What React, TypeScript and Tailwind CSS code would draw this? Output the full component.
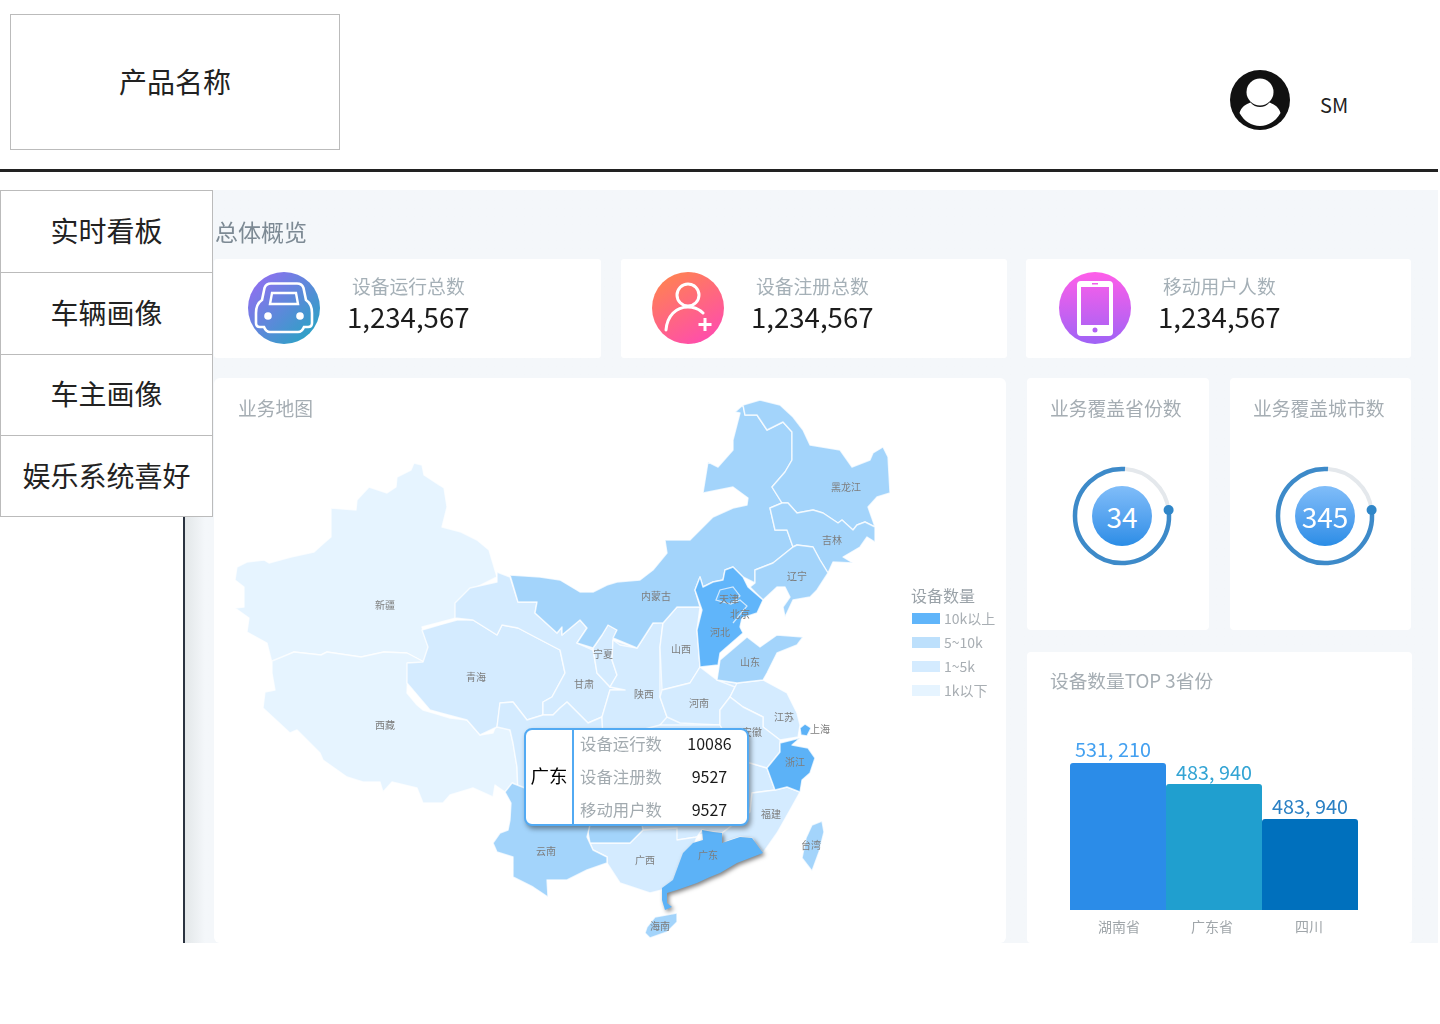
const provinces: { fill: string; pts: string }[] = [
  // base under the central provinces, closes the gaps between them
  { fill: "#d4ebff", pts: "510,577 518,602 557,633 577,643 593,648 613,640 637,648 663,623 677,607 700,607 697,630 700,667 717,680 737,683 760,690 740,760 767,768 722,833 590,843 587,827 518,795 497,727 543,702" },
  // xinjiang
  { fill: "#e6f4ff", pts: "235,580 237,567 247,562 264,560 269,563 291,557 314,552 324,543 331,537 331,508 356,510 357,500 369,487 387,493 396,487 397,477 411,470 414,463 422,465 424,475 444,488 447,507 442,527 461,532 477,540 489,550 497,577 477,587 456,605 456,618 422,627 429,647 426,663 407,653 384,652 361,657 327,652 321,655 294,652 272,663 267,643 247,632 249,618 235,608 244,607 244,587" },
  // xizang
  { fill: "#e6f4ff", pts: "272,661 294,652 321,655 327,652 361,657 384,652 407,653 426,663 408,663 407,693 417,705 423,710 450,718 467,720 480,735 493,733 497,723 510,730 513,743 517,767 518,795 513,783 505,792 495,785 493,797 473,788 450,795 443,803 423,803 417,788 392,782 383,792 380,782 363,782 347,777 323,760 320,753 297,730 290,733 263,708 265,692 275,690 272,673" },
  // qinghai
  { fill: "#d4ebff", pts: "407,663 423,662 428,647 422,630 457,620 473,620 497,635 502,625 518,628 537,638 560,650 565,673 552,697 543,702 543,715 527,720 513,702 500,703 497,727 480,735 467,720 430,710 407,683" },
  // gansu
  { fill: "#d4ebff", pts: "497,572 510,577 518,602 537,602 535,613 557,633 562,627 562,635 580,620 587,628 577,643 593,650 597,673 610,687 625,690 610,690 602,717 588,723 567,702 560,708 553,715 543,715 543,702 552,697 565,673 560,650 537,638 518,628 502,625 497,635 473,620 455,618 455,603 470,588 497,582" },
  // sichuan
  { fill: "#d4ebff", pts: "500,703 513,702 527,720 543,715 553,715 560,708 567,702 588,723 602,717 603,740 620,760 600,790 590,800 560,800 530,790 518,795 517,767 513,743 510,730 497,727" },
  // ningxia
  { fill: "#d4ebff", pts: "593,648 597,673 610,687 617,675 612,660 613,640 617,630 608,625 602,635" },
  // shaanxi
  { fill: "#d4ebff", pts: "663,622 653,623 637,648 620,645 613,640 612,660 617,675 610,687 625,690 610,690 602,717 603,740 640,745 660,725 667,717 660,697 660,647" },
  // shanxi
  { fill: "#d4ebff", pts: "677,607 700,607 697,630 700,667 690,683 662,690 660,647 663,623" },
  // henan
  { fill: "#d4ebff", pts: "660,697 667,717 680,723 720,725 720,710 730,697 735,687 717,680 700,667 690,683 662,690" },
  // central block under the tooltip
  { fill: "#d4ebff", pts: "603,740 660,725 720,725 740,760 767,768 775,790 752,793 750,812 722,833 702,830 697,837 677,840 590,843 587,827 600,790" },
  // jiangsu
  { fill: "#d4ebff", pts: "737,683 763,680 787,693 797,713 800,725 798,737 780,740 763,727 763,717 743,707 730,697" },
  // anhui
  { fill: "#d4ebff", pts: "730,697 743,707 763,717 763,727 780,740 780,752 767,768 740,760 720,725 720,710" },
  // fujian
  { fill: "#d4ebff", pts: "775,790 787,787 800,792 790,810 777,833 763,853 752,838 740,837 722,843 722,833 750,812 752,793" },
  // guangxi
  { fill: "#d4ebff", pts: "590,843 630,843 643,830 677,828 677,840 697,837 693,847 677,880 662,890 650,893 620,883 607,863 607,857 593,850" },
  // guizhou
  { fill: "#a3d4fb", pts: "587,827 600,815 640,815 643,830 630,843 590,843" },
  // yunnan
  { fill: "#a3d4fb", pts: "512,783 505,792 511,803 510,820 508,830 500,833 493,843 497,852 513,857 513,877 533,887 548,897 547,880 567,880 587,870 607,863 607,857 593,850 587,837 590,825 530,790" },
  // neimenggu
  { fill: "#a3d4fb", pts: "510,575 540,577 560,580 580,592 593,592 607,585 617,582 640,580 653,570 667,553 665,540 690,540 713,517 733,508 747,505 748,498 733,487 703,493 708,462 718,467 733,450 733,440 740,413 735,412 743,405 745,415 757,415 767,430 783,422 792,432 792,460 785,472 772,487 782,503 770,508 775,530 787,530 793,547 773,563 755,570 755,583 743,577 733,567 725,570 723,580 713,582 703,587 700,577 695,590 700,607 677,607 663,623 653,623 637,648 613,638 617,630 608,625 602,635 593,648 577,643 587,628 580,620 562,635 562,627 557,633 535,613 537,602 518,602" },
  // heilongjiang
  { fill: "#a3d4fb", pts: "743,405 760,400 780,405 793,417 803,430 810,445 840,450 852,467 870,460 873,453 883,447 888,457 890,493 877,497 868,507 875,527 865,522 857,525 853,530 842,520 838,523 823,513 813,510 797,513 788,503 782,503 772,487 785,472 792,460 792,432 783,422 767,430 757,415 745,415" },
  // jilin
  { fill: "#a3d4fb", pts: "770,508 782,503 788,503 797,513 813,510 823,513 838,523 842,520 853,530 857,525 865,522 875,527 875,542 867,537 860,547 843,557 853,563 833,562 828,573 820,560 813,547 797,545 793,547 787,530 775,530" },
  // liaoning
  { fill: "#a3d4fb", pts: "793,547 797,545 813,547 820,560 828,573 817,590 810,597 793,600 785,617 783,607 790,597 785,587 777,587 763,600 750,587 755,583 755,570 773,563" },
  // shandong
  { fill: "#a3d4fb", pts: "720,660 747,637 760,647 777,635 803,637 797,645 777,653 767,673 763,680 737,683 717,680" },
  // hebei
  { fill: "#60b5fa", pts: "700,577 703,587 713,582 723,580 725,570 733,567 743,577 748,587 763,600 757,613 742,618 740,627 743,633 720,653 718,665 700,667 697,630 702,610 695,590" },
  // taiwan
  { fill: "#a3d4fb", pts: "822,821 812,825 806,838 802,858 812,871 819,852 824,832" },
  // hainan
  { fill: "#a3d4fb", pts: "647,927 655,917 677,913 677,922 667,932 650,938 645,933" },
  // zhejiang
  { fill: "#5cb2f7", pts: "780,743 800,738 792,745 808,748 815,758 810,773 802,780 800,792 787,787 775,790 767,768 780,752" },
  // shanghai
  { fill: "#5cb2f7", pts: "800,728 805,724 811,728 807,736 801,735" },
];

const guangdong =
  "702,830 713,832 722,833 722,843 740,837 752,838 763,853 737,863 720,873 710,877 697,883 677,890 667,893 667,903 672,907 665,910 662,900 662,888 673,880 683,853 693,843 703,840";

const mapLabels: [string, number, number][] = [
  ["新疆", 385, 605],
  ["西藏", 385, 725],
  ["青海", 476, 677],
  ["甘肃", 584, 684],
  ["宁夏", 603, 654],
  ["陕西", 644, 694],
  ["山西", 681, 649],
  ["内蒙古", 656, 596],
  ["河南", 699, 703],
  ["河北", 720, 632],
  ["北京", 740, 614],
  ["天津", 729, 599],
  ["山东", 750, 662],
  ["辽宁", 797, 576],
  ["吉林", 832, 540],
  ["黑龙江", 846, 487],
  ["江苏", 784, 717],
  ["安徽", 752, 732],
  ["上海", 820, 729],
  ["浙江", 795, 762],
  ["福建", 771, 814],
  ["台湾", 811, 845],
  ["广东", 708, 855],
  ["广西", 645, 860],
  ["云南", 546, 851],
  ["海南", 660, 926],
];

const legend = [
  { color: "bg-[#60b5fa]", label: "10k以上" },
  { color: "bg-[#bde0fc]", label: "5~10k" },
  { color: "bg-[#d4ebff]", label: "1~5k" },
  { color: "bg-[#e6f4ff]", label: "1k以下" },
];

const tooltipRows = [
  { label: "设备运行数", value: "10086" },
  { label: "设备注册数", value: "9527" },
  { label: "移动用户数", value: "9527" },
];

const bars = [
  { value: "531, 210", name: "湖南省", height: "h-[147px]", bg: "bg-[#2b8ce8]", text: "text-[#43a0f0] pr-[10px] pb-[2px]", axis: "pl-[2px]" },
  { value: "483, 940", name: "广东省", height: "h-[126px]", bg: "bg-[#209fcf]", text: "text-[#33a4d4]", axis: "pr-[4px]" },
  { value: "483, 940", name: "四川", height: "h-[91px]", bg: "bg-[#0070bd]", text: "text-[#2a80c4] pb-[1px]", axis: "pr-[2px]" },
];

const CarIcon = () => (
  <svg viewBox="0 0 72 72" className="-mt-[2px] h-[72px] w-[72px]">
    <defs>
      <linearGradient id="car" x1="0.1" y1="0.1" x2="0.9" y2="0.9">
        <stop offset="0" stopColor="#8f6ff0" />
        <stop offset="1" stopColor="#2aa3c4" />
      </linearGradient>
    </defs>
    <circle cx="36" cy="36" r="36" fill="url(#car)" />
    <path
      d="M23 11.5 H49 Q54 11.5 55.5 16 L58 28 Q64 32 64 41 V51 Q64 55 60 55 H56 Q54 60 50 60 H22 Q18 60 16 55 H12 Q8 55 8 51 V41 Q8 32 14 28 L16.5 16 Q18 11.5 23 11.5 Z"
      fill="none"
      stroke="#fff"
      strokeWidth="2.6"
    />
    <path d="M24 21 H48 L50 32 H22 Z" fill="none" stroke="#fff" strokeWidth="2.4" />
    <circle cx="20" cy="44" r="3.8" fill="#fff" />
    <circle cx="52" cy="44" r="3.8" fill="#fff" />
  </svg>
);

const PersonIcon = () => (
  <svg viewBox="0 0 72 72" className="-mt-[2px] h-[72px] w-[72px]">
    <defs>
      <linearGradient id="person" x1="0.2" y1="0.05" x2="0.7" y2="0.95">
        <stop offset="0" stopColor="#ff8153" />
        <stop offset="1" stopColor="#ff4fa9" />
      </linearGradient>
    </defs>
    <circle cx="36" cy="36" r="36" fill="url(#person)" />
    <circle cx="36" cy="23" r="11" fill="none" stroke="#fff" strokeWidth="3" />
    <path d="M14 58 C15 44 24 35 36 35 C42 35 47 37 51 41" fill="none" stroke="#fff" strokeWidth="3" strokeLinecap="round" />
    <path d="M53 46 V59 M46.5 52.5 H59.5" stroke="#fff" strokeWidth="3" />
  </svg>
);

const PhoneIcon = () => (
  <svg viewBox="0 0 72 72" className="-mt-[2px] h-[72px] w-[72px]">
    <defs>
      <linearGradient id="phone" x1="0.5" y1="0" x2="0.5" y2="1">
        <stop offset="0" stopColor="#ff5ee9" />
        <stop offset="1" stopColor="#9f63f6" />
      </linearGradient>
    </defs>
    <circle cx="36" cy="36" r="36" fill="url(#phone)" />
    <path
      fillRule="evenodd"
      fill="#fff"
      d="M22 9 H50 Q54 9 54 13 V60 Q54 64 50 64 H22 Q18 64 18 60 V13 Q18 9 22 9 Z M22 15 V53 H50 V15 Z M33 11 V12.5 H39 V11 Z M36 55.5 A2.5 2.5 0 1 0 36 60.5 A2.5 2.5 0 1 0 36 55.5 Z"
    />
  </svg>
);

const StatCard = ({ icon, label, value, inset }: { icon: React.ReactNode; label: string; value: string; inset: string }) => (
  <div className={`flex h-[99px] items-center rounded-[3px] bg-white ${inset}`}>
    {icon}
    <div className="ml-[27px] flex flex-col pb-[11px]">
      <span className="pl-[5px] text-[18.8px] leading-[26px] text-[#a5b0b7]">{label}</span>
      <span className="text-[27.6px] leading-[34px] text-[#1c1c1c]">{value}</span>
    </div>
  </div>
);

const GaugeCard = ({ title, value, className }: { title: string; value: string; className: string }) => (
  <div className={`h-[252px] rounded-[4px] bg-white pl-[23px] pt-[16px] ${className}`}>
    <div className="text-[18.8px] leading-[28px] text-[#a5adb3]">{title}</div>
    <div className="relative ml-[22px] mt-[44px] flex h-[100px] w-[100px] items-center justify-center">
      <svg viewBox="0 0 100 100" className="absolute inset-0 h-[100px] w-[100px] overflow-visible">
        <path d="M53 3.1 A47 47 0 0 1 96.6 44" fill="none" stroke="#e4e8ec" strokeWidth="4" />
        <path d="M96.6 44 A47 47 0 1 1 53 3.1" fill="none" stroke="#3d8ac9" strokeWidth="4.5" />
        <circle cx="96.6" cy="44" r="5" fill="#2f86c8" />
      </svg>
      <div className="flex h-[60px] w-[60px] items-center justify-center rounded-full bg-linear-to-b from-[#80bdf9] to-[#2a8de6] text-[28px] text-white">
        {value}
      </div>
    </div>
  </div>
);

const ChinaMap = () => (
  <svg viewBox="214 378 792 565" className="absolute inset-0 h-[565px] w-[792px]">
    {provinces.map((p, i) => (
      <polygon key={i} points={p.pts} fill={p.fill} stroke="#fff" strokeOpacity="0.75" strokeWidth="1.4" strokeLinejoin="round" />
    ))}
    <polygon points={guangdong} fill="#5cb2f7" className="drop-shadow-[2px_2px_2px_rgba(0,0,0,0.5)]" />
    <path d="M716 600 L720 590 L733 587 L740 596 L731 604 L716 600 Z M731 604 L740 600 L747 606 L733 623" fill="none" stroke="#cfe8fd" strokeWidth="1.2" />
    {mapLabels.map(([name, x, y]) => (
      <text key={name} x={x} y={y + 3.5} textAnchor="middle" fontSize="10" fill="#7d7d7d">
        {name}
      </text>
    ))}
  </svg>
);

const MapTooltip = () => (
  <div className="absolute left-[310px] top-[350px] flex h-[98px] w-[225px] rounded-[8px] border-2 border-[#52aaf3] bg-white shadow-[2px_3px_5px_rgba(0,0,0,0.4)]">
    <div className="flex w-[48px] shrink-0 items-center justify-center border-r-2 border-[#52aaf3] pb-[2px] text-[18.5px] text-black">广东</div>
    <div className="flex flex-1 flex-col justify-center pb-[2px] pl-[6px]">
      {tooltipRows.map((row) => (
        <div key={row.label} className="flex h-[33px] shrink-0 items-center text-[16px]">
          <span className="w-[82px] shrink-0 text-[16.4px] text-[#a3abb0]">{row.label}</span>
          <span className="w-[85px] shrink-0 pl-[10px] text-center text-[#1a1a1a]">{row.value}</span>
        </div>
      ))}
    </div>
  </div>
);

const MapLegend = () => (
  <div className="absolute left-[697px] top-[206px] flex flex-col">
    <span className="text-[16px] leading-[22px] text-[#9aa2a8]">设备数量</span>
    {legend.map((item) => (
      <div key={item.label} className="flex h-[24px] items-center gap-[4px] pl-px">
        <span className={`h-[11px] w-[28px] ${item.color}`} />
        <span className="text-[14px] text-[#a8aeb3]">{item.label}</span>
      </div>
    ))}
  </div>
);

export default function App() {
  return (
    <div className="min-h-[1024px] w-[1438px] bg-white font-['Noto_Sans_CJK_SC',sans-serif]">
      <header className="flex h-[172px] items-start border-b-[3px] border-[#222] pl-[10px] pt-[14px]">
        <div className="flex h-[136px] w-[330px] items-center justify-center border border-[#bbb] pb-[2px] text-[28px] text-[#222]">
          产品名称
        </div>
        <div className="ml-[890px] mt-[56px] flex items-center">
          <svg viewBox="0 0 60 60" className="h-[60px] w-[60px]">
            <circle cx="30" cy="30" r="30" fill="#111" />
            <circle cx="30" cy="22" r="13.5" fill="#fff" />
            <path
              d="M9.5 43 C11 37 16 34 20.5 32.5 C23 35.5 26.5 37 30 37 C33.5 37 37 35.5 39.5 32.5 C44 34 49 37 50.5 43 C46 51 38.5 56 30 56 C21.5 56 14 51 9.5 43 Z"
              fill="#fff"
            />
          </svg>
          <span className="ml-[30px] mt-[10px] text-[20px] text-[#222]">SM</span>
        </div>
      </header>

      <div className="mt-[18px] flex items-start">
        <nav className="relative z-10 w-[213px] shrink-0 border border-[#bbb] bg-white text-[28px] text-[#222]">
          {["实时看板", "车辆画像", "车主画像", "娱乐系统喜好"].map((item, i) => (
            <div key={item} className={`flex h-[81.3px] items-center justify-center pb-[3px] ${i > 0 ? "border-t border-[#bbb]" : ""}`}>
              {item}
            </div>
          ))}
        </nav>

        <main className="-ml-[30px] h-[753px] flex-1 overflow-hidden border-l-2 border-[#2b3340] bg-linear-to-r from-[#e3e7e9] from-0% to-[#f4f7fa] to-[1.6%]">
          <div className="h-full pl-[29px] pr-[27px] blur-[0.4px]">
            <h1 className="pl-[1px] pt-[24px] text-[23px] leading-[34px] text-[#7d8a94]">总体概览</h1>
            <div className="mt-[11px] grid grid-cols-[387px_386px_1fr] gap-x-[19.5px]">
              <StatCard icon={<CarIcon />} label="设备运行总数" value="1,234,567" inset="pl-[34px]" />
              <StatCard icon={<PersonIcon />} label="设备注册总数" value="1,234,567" inset="pl-[31.5px]" />
              <StatCard icon={<PhoneIcon />} label="移动用户人数" value="1,234,567" inset="pl-[33px]" />
            </div>

            <div className="mt-[20px] flex gap-[21px]">
              <section className="relative h-[565px] w-[792px] shrink-0 rounded-[6px] bg-white">
                <ChinaMap />
                <h2 className="absolute left-[24px] top-[16px] text-[18.8px] leading-[28px] text-[#a5adb3]">业务地图</h2>
                <MapLegend />
                <MapTooltip />
              </section>

              <div className="flex flex-1 flex-col gap-[22px]">
                <div className="flex gap-[21px]">
                  <GaugeCard title="业务覆盖省份数" value="34" className="w-[182px]" />
                  <GaugeCard title="业务覆盖城市数" value="345" className="w-[181px]" />
                </div>
                <section className="-mr-px h-[291px] rounded-[4px] bg-white pl-[23px] pt-[14px]">
                  <h2 className="text-[18.7px] leading-[28px] text-[#a5adb3]">设备数量TOP 3省份</h2>
                  <div className="ml-[20px] mt-[34px] grid h-[182px] w-[288px] grid-cols-3 items-end">
                    {bars.map((bar) => (
                      <div key={bar.name} className="flex flex-col items-center">
                        <span className={`text-[19.8px] leading-[24px] ${bar.text}`}>{bar.value}</span>
                        <div className={`w-full rounded-t-[3px] ${bar.height} ${bar.bg}`} />
                      </div>
                    ))}
                  </div>
                  <div className="ml-[20px] mt-[6px] grid w-[288px] grid-cols-3 text-center text-[14px] leading-[20px] text-[#a0a6aa]">
                    {bars.map((bar) => (
                      <span key={bar.name} className={bar.axis}>{bar.name}</span>
                    ))}
                  </div>
                </section>
              </div>
            </div>
          </div>
        </main>
      </div>
    </div>
  );
}
